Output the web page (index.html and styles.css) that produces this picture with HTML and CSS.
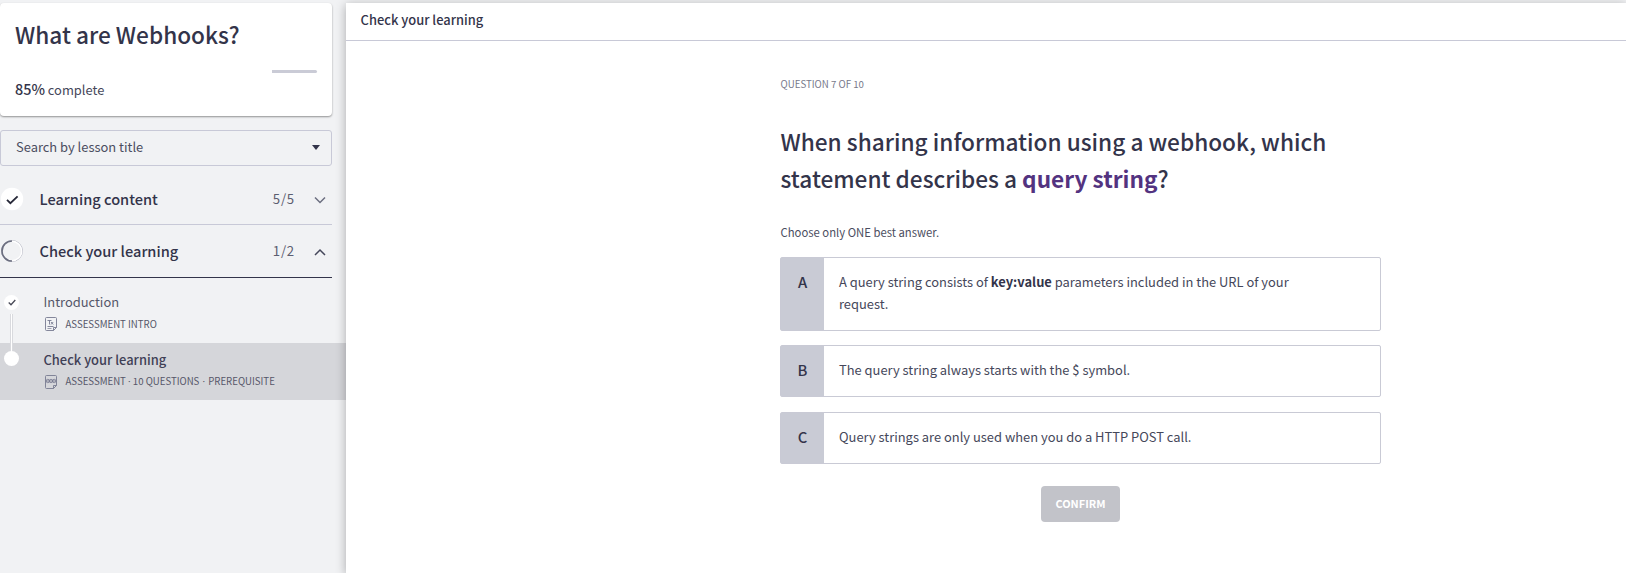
FILE: index.html
```html
<!DOCTYPE html>
<html lang="en">
<head>
<meta charset="utf-8">
<title>What are Webhooks?</title>
<link rel="stylesheet" href="styles.css">
</head>
<body>
<div class="app">
  <aside class="sidebar">
    <section class="course">
      <h1 class="course-title">What are Webhooks?</h1>
      <div class="progress"><span class="progress-rest"></span></div>
      <p class="complete"><strong>85%</strong> complete</p>
    </section>
    <div class="search"><span>Search by lesson title</span>
      <svg width="8" height="5" viewBox="0 0 8 5"><path d="M0 0h8L4 5z" fill="#33344a"/></svg>
    </div>
    <div class="section">
      <svg class="status" width="24" height="24" viewBox="0 0 24 24"><circle cx="12" cy="12" r="11.2" fill="#fff"/><path d="M7 12.8l3.4 3.4L17.6 9.300" fill="none" stroke="#262838" stroke-width="1.8"/></svg>
      <span class="section-name">Learning content</span>
      <span class="count">5/5</span>
      <svg class="chevron" width="12" height="8" viewBox="0 0 12 8"><path d="M1 1.500l5 5 5-5" fill="none" stroke="#6c6f80" stroke-width="1.5"/></svg>
    </div>
    <div class="section open">
      <svg class="status" width="24" height="24" viewBox="0 0 24 24"><circle cx="12" cy="12" r="10.500" fill="none" stroke="#b9bbc6" stroke-width="1"/><circle cx="12" cy="12" r="9.700" fill="none" stroke="#fff" stroke-width="1.400"/><path d="M12 2A10 10 0 0 0 12 22" fill="none" stroke="#6c6f80" stroke-width="1.700"/></svg>
      <span class="section-name">Check your learning</span>
      <span class="count">1/2</span>
      <svg class="chevron" width="12" height="8" viewBox="0 0 12 8"><path d="M1 7l5-5 5 5" fill="none" stroke="#45475a" stroke-width="1.5"/></svg>
    </div>
    <ul class="lessons">
      <li class="lesson">
        <span class="dot"><svg width="8" height="7" viewBox="0 0 8 7"><path d="M.7 3.500l2.300 2.200L7.300 1" fill="none" stroke="#4a4b58" stroke-width="1.300"/></svg></span>
        <span class="link"></span>
        <div class="lesson-text">
          <div class="lesson-name">Introduction</div>
          <div class="meta"><svg width="12" height="14" viewBox="0 0 12 14" fill="none" stroke="#777a91"><path d="M1.500.5h9a1 1 0 0 1 1 1v9l-3 3h-7a1 1 0 0 1-1-1v-11a1 1 0 0 1 1-1zM11.500 10.500h-3v3M2.500 3.500h4M4.500 3.500v4M6 5l2.200 2.500M8.200 5L6 7.500M2.500 9.500h6" stroke-width=".9"/><path d="M2.500 11.500h4" stroke-width=".7"/></svg><span>ASSESSMENT INTRO</span></div>
        </div>
      </li>
      <li class="lesson current">
        <span class="dot"></span>
        <div class="lesson-text">
          <div class="lesson-name">Check your learning</div>
          <div class="meta"><svg width="12" height="14" viewBox="0 0 12 14" fill="none" stroke="#777a91"><path d="M1.500.5h9a1 1 0 0 1 1 1v9l-3 3h-7a1 1 0 0 1-1-1v-11a1 1 0 0 1 1-1zM11.500 10.500h-3v3" stroke-width=".9"/><g stroke-width=".8"><circle cx="2.800" cy="6" r="1.700"/><circle cx="6" cy="6" r="1.700"/><circle cx="9.200" cy="6" r="1.700"/><path d="M1 6h10"/></g></svg><span>ASSESSMENT <i>·</i> 10 QUESTIONS <i class="wide">·</i> PREREQUISITE</span></div>
        </div>
      </li>
    </ul>
  </aside>
  <main class="content">
    <header class="topbar">Check your learning</header>
    <div class="quiz">
      <p class="number">QUESTION 7 OF 10</p>
      <h2 class="question">When sharing information using a webhook, which<br>statement describes a <b>query string</b>?</h2>
      <p class="hint">Choose only ONE best answer.</p>
      <div class="option first"><span class="letter">A</span><p class="answer">A query string consists of <b>key:value</b> parameters included in the URL of your<br>request.</p></div>
      <div class="option"><span class="letter">B</span><p class="answer">The query string always starts with the $ symbol.</p></div>
      <div class="option"><span class="letter">C</span><p class="answer">Query strings are only used when you do a HTTP POST call.</p></div>
      <button class="confirm">CONFIRM</button>
    </div>
  </main>
</div>
</body>
</html>
```
FILE: styles.css
```css
* { box-sizing: border-box; margin: 0; padding: 0; }
body { background: #f1f2f4; color: #33344a; font: 12.91px/22px "Noto Sans CJK SC", "Noto Sans", sans-serif; overflow: hidden; }
.app { display: flex; height: 573px; padding-top: 3px; }
.sidebar { width: 346px; flex: none; }
.course { width: 332px; height: 113px; padding: 14px 15px 0; background: #fff; border-radius: 4px; box-shadow: 0 1px 2px rgba(0,0,0,.4); }
.course-title { font-size: 22.64px; line-height: 36px; font-weight: 500; }
.progress { display: flex; justify-content: flex-end; margin-top: 17px; height: 3px; }
.progress-rest { width: 45px; background: #cacbd6; border-radius: 0 2px 2px 0; }
.complete { margin-top: 5px; color: #45475a; }
.complete strong { font-weight: 500; font-size: 14.4px; color: #33344a; }
.search { display: flex; align-items: center; justify-content: space-between; width: 332px; height: 36px; margin-top: 14px; padding: 0 11px 2px 15px; border: 1px solid #c8c9d7; border-radius: 3px; color: #4b4d60; }
.section { display: flex; align-items: center; width: 332px; height: 53px; border-bottom: 1px solid #c8c9d7; padding-right: 6px; }
.search + .section { margin-top: 6px; padding-top: 2px; }
.section.open { border-color: #33344a; }
.section-name { flex: 1; margin-left: 15.5px; font-size: 14.6px; font-weight: 500; }
.count { margin-right: 19px; color: #5c5e70; font-size: 13.2px; letter-spacing: .8px; }
.chevron { margin-top: 2px; }
.lessons { list-style: none; }
.lesson { position: relative; display: flex; height: 65px; padding: 13px 0 0 4px; }
.lesson.current { height: 57px; padding-top: 6px; background: #d5d6da; }
.dot { display: flex; align-items: center; justify-content: center; width: 15px; height: 15px; margin-top: 4px; background: #fff; border-radius: 50%; }
.current .dot { margin-top: 2px; }
.link { position: absolute; z-index: 1; left: 10px; top: 36px; width: 3px; height: 37px; background: #fff; border-left: 1px solid #d9dade; border-right: 1px solid #d9dade; }
.lesson-text { margin-left: 24.5px; color: #555769; }
.lesson-name { line-height: 22px; }
.current .lesson-name { font-weight: 500; color: #3f4056; }
.meta { display: flex; align-items: center; gap: 9px; margin-left: 1px; font-size: 9.65px; line-height: 22px; }
.current .meta { line-height: 21px; }
.meta i { font-family: "Noto Sans", sans-serif; font-style: normal; line-height: 1; }
.meta .wide { margin: 0 1px; }
.content { position: relative; z-index: 2; flex: 1; background: #fff; box-shadow: 0 2px 10px rgba(0,0,0,.3); }
.topbar { height: 38px; padding: 6px 14.6px; border-bottom: 1px solid #c8c9d7; font-weight: 500; }
.quiz { width: 601px; margin-left: 434px; padding-top: 32px; }
.number { padding-left: .5px; font-size: 9.7px; color: #77798a; }
.question { margin-top: 28px; padding-left: .5px; font-size: 22.64px; line-height: 37px; font-weight: 500; }
.question b { color: #533380; font-weight: 700; }
.hint { margin: 24px 0 14px; padding-left: .5px; font-size: 11.3px; color: #4b4d60; }
.option { display: flex; height: 52px; margin-bottom: 15px; border: 1px solid #c9cad5; border-radius: 2px; }
.option.first { height: 74px; margin-bottom: 14px; }
.letter { width: 43px; padding-top: 13px; background: #c9cbd5; font-size: 14.8px; font-weight: 500; text-align: center; }
.answer { padding: 13px 15px; color: #45475a; }
.answer b { color: #33344a; }
.confirm { display: block; width: 79px; height: 36px; margin: 22px auto 0; padding-bottom: 2px; border: 0; border-radius: 4px; background: #c2c3c9; color: #fff; font: 700 10.9px/34px "Noto Sans CJK SC", sans-serif; }
```
